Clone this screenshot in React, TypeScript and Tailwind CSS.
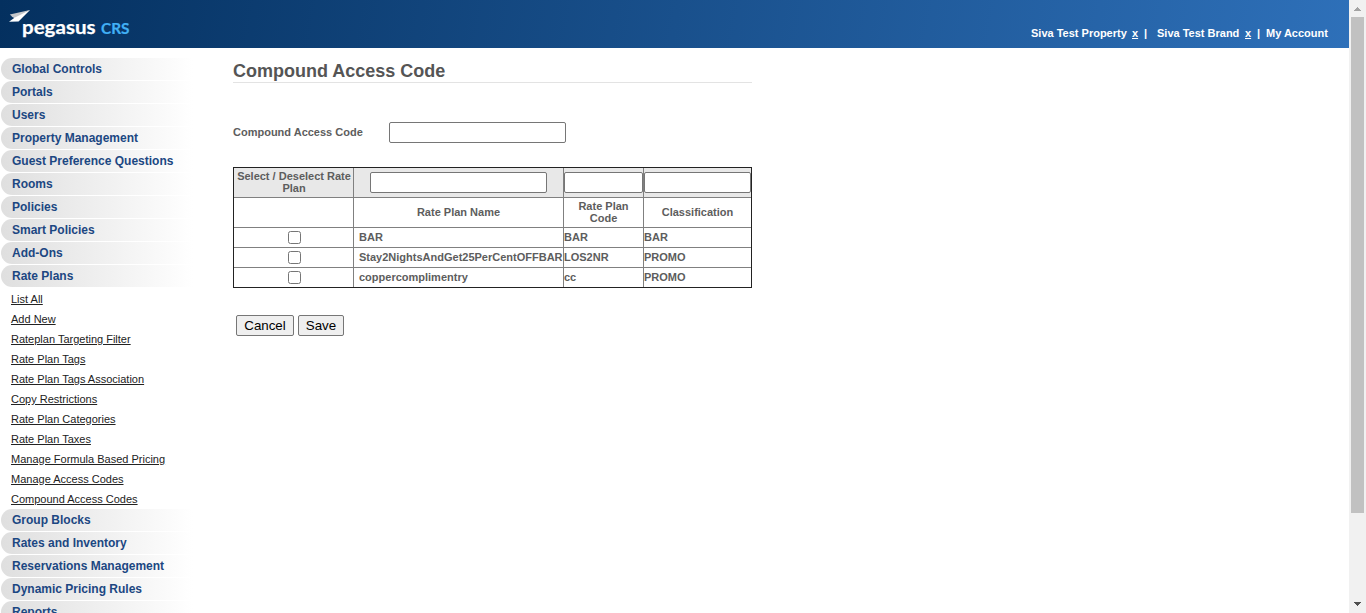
const topSections = [
  'Global Controls',
  'Portals',
  'Users',
  'Property Management',
  'Guest Preference Questions',
  'Rooms',
  'Policies',
  'Smart Policies',
  'Add-Ons',
  'Rate Plans',
];

const ratePlanLinks = [
  'List All',
  'Add New',
  'Rateplan Targeting Filter',
  'Rate Plan Tags',
  'Rate Plan Tags Association',
  'Copy Restrictions',
  'Rate Plan Categories',
  'Rate Plan Taxes',
  'Manage Formula Based Pricing',
  'Manage Access Codes',
  'Compound Access Codes',
];

const bottomSections = [
  'Group Blocks',
  'Rates and Inventory',
  'Reservations Management',
  'Dynamic Pricing Rules',
  'Reports',
];

const ratePlans = [
  { name: 'BAR', code: 'BAR', classification: 'BAR' },
  { name: 'Stay2NightsAndGet25PerCentOFFBAR', code: 'LOS2NR', classification: 'PROMO' },
  { name: 'coppercomplimentry', code: 'cc', classification: 'PROMO' },
];

function Logo() {
  return (
    <svg width="140" height="48" viewBox="0 0 140 48" className="block shrink-0">
      <path d="M30 10 L18.5 21.4 L9 21.8 L14.5 17.8 L11.5 16.8 Z" fill="#ffffff" />
      <path d="M30 10 L9.8 14.6 L12.5 17 L15 17.6 Z" fill="#c4c6ca" />
      <text x="22" y="34" fontFamily="Lato, sans-serif" fontWeight="700" fontSize="19" fill="#ffffff" stroke="#ffffff" strokeWidth="0.25" textLength="73.5" lengthAdjust="spacingAndGlyphs">
        pegasus
      </text>
      <text x="101" y="34" fontFamily="Lato, sans-serif" fontWeight="700" fontSize="14.5" fill="#41b0f5" stroke="#41b0f5" strokeWidth="0.2" textLength="28.5" lengthAdjust="spacingAndGlyphs">
        CRS
      </text>
    </svg>
  );
}

function Section({ label }: { label: string }) {
  return (
    <a className="mb-px ml-px block h-[22px] w-[192px] shrink-0 rounded-l-full bg-linear-to-r from-[#dfdfdf] to-white pl-[11px] text-[12px] leading-[22px] font-bold whitespace-nowrap text-[#1c4782]">
      {label}
    </a>
  );
}

function TextField({ className }: { className: string }) {
  return <input type="text" className={`block h-[21px] rounded-[2px] border border-[#767676] bg-white ${className}`} />;
}

function Scrollbar() {
  return (
    <div className="flex h-full w-[17px] shrink-0 flex-col items-center bg-[#f1f1f1]">
      <svg width="17" height="17" viewBox="0 0 17 17" className="shrink-0" shapeRendering="crispEdges">
        <path d="M8 7h1v1h1v1h1v1h1v1H5v-1h1V9h1V8h1z" fill="#a3a3a3" />
      </svg>
      <div className="h-[496px] w-[13px] bg-[#c1c1c1]" />
      <svg width="17" height="17" viewBox="0 0 17 17" className="mt-auto shrink-0" shapeRendering="crispEdges">
        <path d="M5 6h7v1h-1v1h-1v1H9v1H8V9H7V8H6V7H5z" fill="#505050" />
      </svg>
    </div>
  );
}

export default function App() {
  return (
    <div className="flex h-[613px] w-[1366px] overflow-hidden bg-white font-['Liberation_Sans',Arial,sans-serif]">
      <div className="flex min-w-0 flex-1 flex-col">
        <header className="flex h-12 shrink-0 justify-between bg-[linear-gradient(100deg,#04305f,#2e70b9)]">
          <Logo />
          <div className="flex pt-[27px] pr-[20px] text-[11px] leading-[13px] font-bold whitespace-pre text-white">
            <span className="w-[101px]">Siva Test Property</span>
            <span className="w-[12px] underline">x</span>
            <span className="w-[13px]">|</span>
            <span className="w-[88px]">Siva Test Brand</span>
            <span className="w-[12px] underline">x</span>
            <span className="w-[9px]">|</span>
            <span className="w-[63px]">My Account</span>
          </div>
        </header>
        <div className="flex min-h-0 flex-1">
          <nav className="flex w-[233px] shrink-0 flex-col overflow-hidden pt-[10px]">
            {topSections.map((s) => (
              <Section key={s} label={s} />
            ))}
            <div className="flex shrink-0 flex-col pt-px pl-[11px]">
              {ratePlanLinks.map((l) => (
                <a key={l} className="block h-5 text-[11px] leading-[20px] whitespace-nowrap text-[#222222] underline">
                  {l}
                </a>
              ))}
            </div>
            {bottomSections.map((s) => (
              <Section key={s} label={s} />
            ))}
          </nav>
          <main className="w-[519px] shrink-0 text-[11px] font-bold text-[#5d5d5d]">
            <h1 className="h-[35px] border-b border-[#e3e3e3] pt-[12px] text-[18px] leading-[22px] text-[#555555]">
              Compound Access Code
            </h1>
            <div className="mt-[39px] flex items-center">
              <label className="w-[156px]">Compound Access Code</label>
              <TextField className="w-[177px]" />
            </div>
            <div className="mt-[24px] border border-[#222222] leading-[12px]">
              <div className="grid h-[30px] grid-cols-[120px_210px_80px_107px] border-b border-[#808080] bg-[#e8e8e8]">
                <div className="border-r border-[#808080] pt-[2px] pl-px text-center">Select / Deselect Rate Plan</div>
                <div className="border-r border-[#808080] pt-[4px] pl-[16px]">
                  <TextField className="w-[177px]" />
                </div>
                <div className="border-r border-[#808080] pt-[4px]">
                  <TextField className="w-[79px]" />
                </div>
                <div className="pt-[4px]">
                  <TextField className="w-[107px]" />
                </div>
              </div>
              <div className="grid h-[30px] grid-cols-[120px_210px_80px_107px] border-b border-[#808080] text-center">
                <div className="border-r border-[#808080]" />
                <div className="flex items-center justify-center border-r border-[#808080] pb-[2px]">Rate Plan Name</div>
                <div className="flex items-center justify-center border-r border-[#808080] px-2 pb-[2px]">Rate Plan Code</div>
                <div className="flex items-center justify-center pb-[2px]">Classification</div>
              </div>
              {ratePlans.map((p) => (
                <div
                  key={p.name}
                  className="grid h-5 grid-cols-[120px_210px_80px_107px] border-b border-[#808080] leading-[19px] last:h-[19px] last:border-b-0"
                >
                  <div className="flex items-center justify-center border-r border-[#808080] pl-[2px]">
                    <input type="checkbox" className="m-0 h-[13px] w-[13px]" />
                  </div>
                  <div className="border-r border-[#808080] pl-[5px] whitespace-nowrap">{p.name}</div>
                  <div className="border-r border-[#808080]">{p.code}</div>
                  <div>{p.classification}</div>
                </div>
              ))}
            </div>
            <div className="mt-[27px] ml-[3px] flex gap-[4px] text-[13.333px] font-normal text-black">
              <button className="h-[21px] w-[58px] rounded-[2px] border border-[#767676] bg-[#efefef] leading-[19px]">Cancel</button>
              <button className="h-[21px] w-[46px] rounded-[2px] border border-[#767676] bg-[#efefef] leading-[19px]">Save</button>
            </div>
          </main>
        </div>
      </div>
      <Scrollbar />
    </div>
  );
}
